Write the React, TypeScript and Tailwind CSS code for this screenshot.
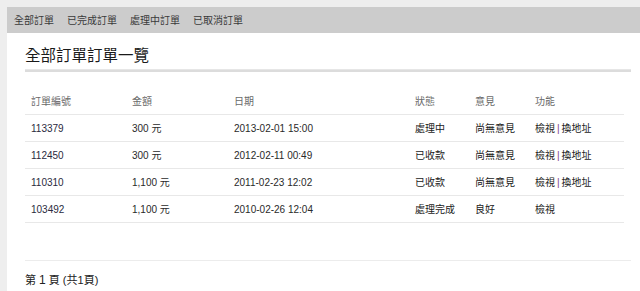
import React from "react";

const rows = [
  { id: "113379", amt: "300 元", date: "2013-02-01 15:00", status: "處理中", note: "尚無意見", addr: true },
  { id: "112450", amt: "300 元", date: "2012-02-11 00:49", status: "已收款", note: "尚無意見", addr: true },
  { id: "110310", amt: "1,100 元", date: "2011-02-23 12:02", status: "已收款", note: "尚無意見", addr: true },
  { id: "103492", amt: "1,100 元", date: "2010-02-26 12:04", status: "處理完成", note: "良好", addr: false },
];

const font = { fontFamily: '"Liberation Sans", "Noto Sans CJK TC", sans-serif' };

export default function App() {
  return (
    <div className="w-[640px] h-[291px] overflow-hidden bg-[#eeeeee] pt-[7px] pl-[7px]" style={font}>
      <div className="h-[26px] bg-[#cccccc] flex items-center pl-[7px] gap-[13px] text-[10px] text-[#3a3a3a]">
        <span>全部訂單</span>
        <span>已完成訂單</span>
        <span>處理中訂單</span>
        <span>已取消訂單</span>
      </div>
      <div className="bg-white h-[260px] pl-[18px] pt-[13px]">
        <div className="w-[606px]">
          <h1 className="text-[15.5px] leading-[20px] text-[#1a1a1a] font-normal">全部訂單訂單一覽</h1>
          <div className="mt-[3px] h-[3px] bg-[#dcdcdc] border-t border-[#e6e6e6]" />
          <div className="mt-[16px] w-[599px] text-[10px]">
            <div className="grid grid-cols-[101px_102px_181px_60px_60px_89px] h-[27px] items-center border-b border-[#e8e8e8] text-[#6a6a6a]">
              <div className="pl-[6px]">訂單編號</div>
              <div className="pl-[6px]">金額</div>
              <div className="pl-[6px]">日期</div>
              <div className="pl-[6px]">狀態</div>
              <div className="pl-[6px]">意見</div>
              <div className="pl-[6px]">功能</div>
            </div>
            {rows.map((r) => (
              <div
                key={r.id}
                className="grid grid-cols-[101px_102px_181px_60px_60px_89px] h-[27px] items-center border-b border-[#e8e8e8] text-[#222]"
              >
                <div className="pl-[6px] text-[#2a2a40]">{r.id}</div>
                <div className="pl-[6px] text-[#2a2a2a]">{r.amt}</div>
                <div className="pl-[6px] text-[#2a2a2a]">{r.date}</div>
                <div className="pl-[6px]">{r.status}</div>
                <div className="pl-[6px]">{r.note}</div>
                <div className="pl-[6px]">
                  檢視
                  {r.addr && (
                    <>
                      <span className="text-[#7a3f8a] mx-[2px]">|</span>換地址
                    </>
                  )}
                </div>
              </div>
            ))}
          </div>
          <div className="mt-[37px] h-px bg-[#ececec]" />
          <div className="mt-[12px] text-[11px] text-[#222] leading-[14px]">
            第 <span className="text-[12px]">1</span> 頁 (共1頁)
          </div>
        </div>
      </div>
    </div>
  );
}
